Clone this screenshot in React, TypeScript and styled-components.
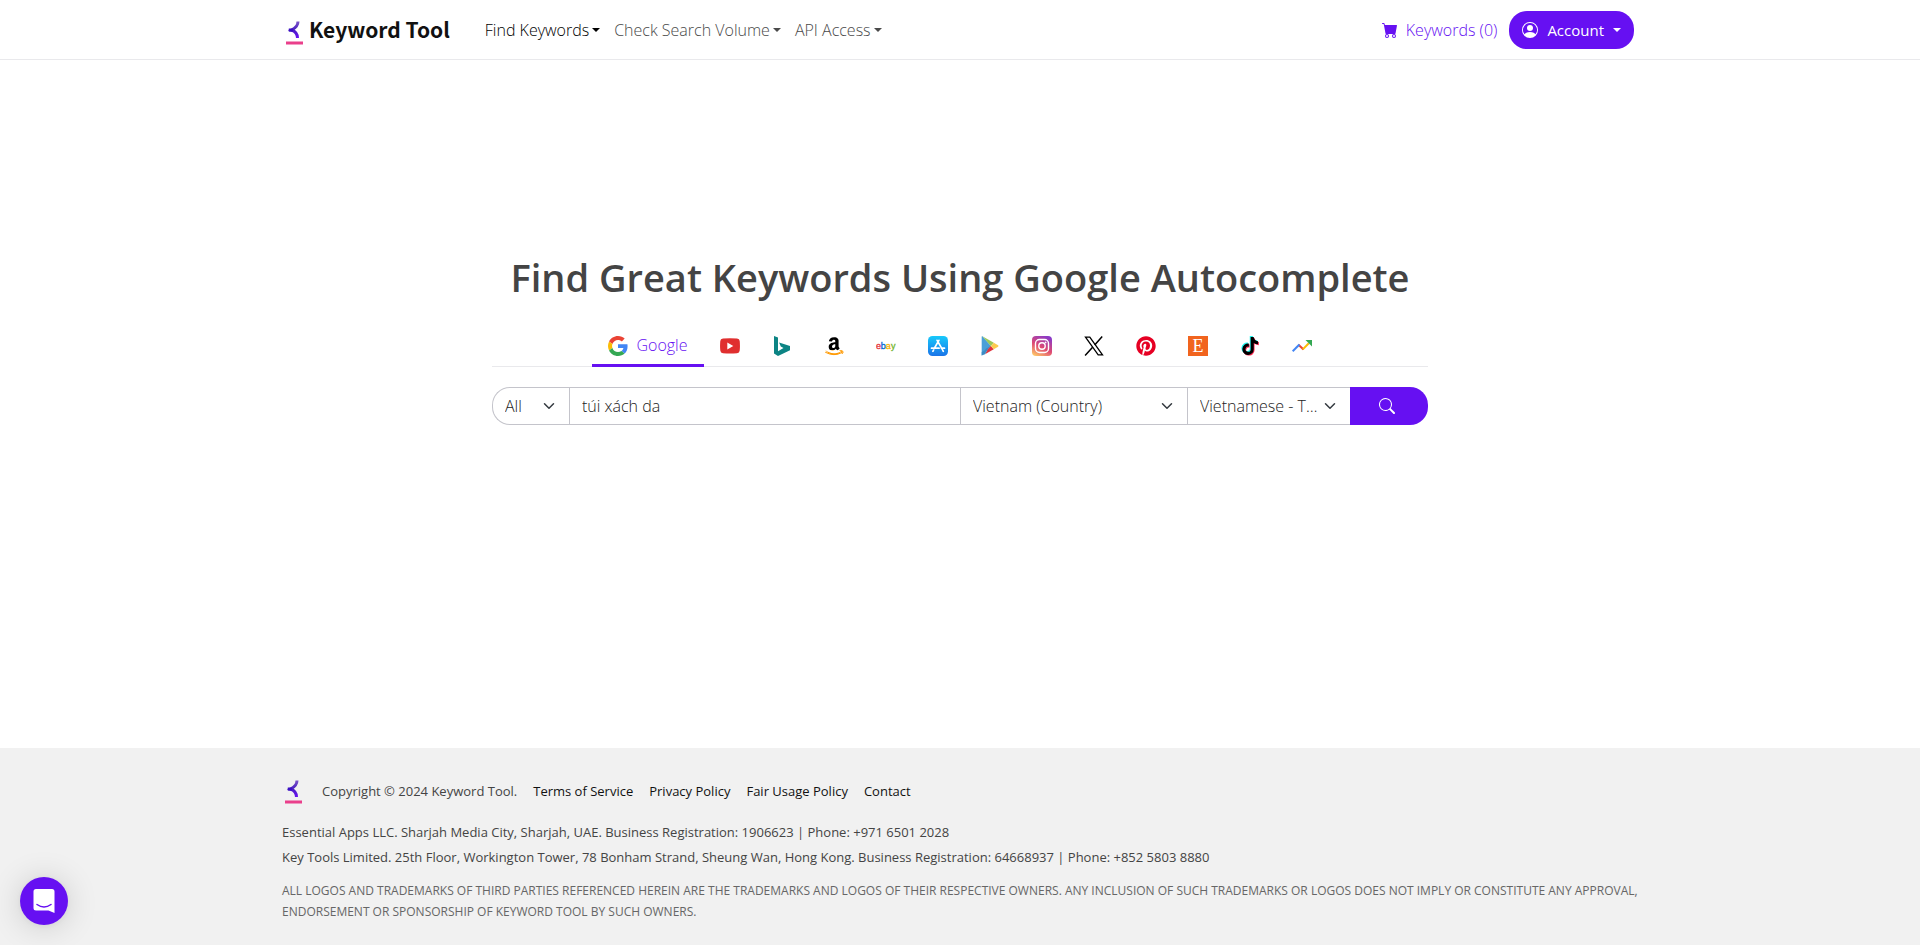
import React, { useState } from 'react';
import styled, { createGlobalStyle } from 'styled-components';
import { BsCartFill, BsPersonCircle, BsSearch } from 'react-icons/bs';
import { FaAmazon, FaPinterest, FaTiktok } from 'react-icons/fa6';

const violet = '#6610f2';
const line = '#e9e9ec';

const GlobalStyle = createGlobalStyle`
  *, *::before, *::after { box-sizing: border-box; }
  body {
    margin: 0;
    background: #fff;
    color: #222;
    font-family: "Open Sans", "Noto Sans", sans-serif;
    font-size: 16px;
    font-weight: 300;
    line-height: 24px;
  }
  a { text-decoration: none; color: inherit; }
  button, input, select { font: inherit; color: inherit; margin: 0; }
  svg { display: block; flex: none; }
`;

const Page = styled.div`
  min-height: 100vh;
  display: flex;
  flex-direction: column;
`;

const Header = styled.header`
  border-bottom: 1px solid ${line};
`;

const HeaderInner = styled.div`
  max-width: 1348px;
  height: 59px;
  margin: 0 auto;
  display: flex;
  align-items: center;
`;

const Brand = styled.a`
  display: flex;
  align-items: flex-end;
  gap: 6px;
  margin-right: 28px;
  padding-bottom: 1px;
  color: #111;
  font-family: "Noto Sans CJK JP", "Noto Sans", sans-serif;
  font-size: 21px;
  font-weight: 700;
  line-height: 30px;
  white-space: nowrap;
`;

const BrandName = styled.span`
  padding-bottom: 1px;
`;

const Nav = styled.nav`
  display: flex;
  flex: 1;
`;

const MenuButton = styled.button<{ $active?: boolean }>`
  display: flex;
  align-items: center;
  gap: 3px;
  padding: 8px 7px;
  border: 0;
  background: none;
  white-space: nowrap;
  color: ${(p) => (p.$active ? '#000' : '#4a4a4a')};
`;

const Caret = styled.span`
  width: 0;
  height: 0;
  border: 4px solid transparent;
  border-top-color: currentColor;
  border-bottom: 0;
`;

const CartLink = styled.a`
  display: flex;
  align-items: center;
  gap: 8px;
  padding: 0 12px;
  color: ${violet};
  white-space: nowrap;
`;

const AccountButton = styled.button`
  display: flex;
  align-items: center;
  gap: 9px;
  height: 38px;
  padding: 0 13px;
  border: 0;
  border-radius: 18px;
  background: ${violet};
  color: #fff;
  font-size: 15px;
  font-weight: 400;
  white-space: nowrap;
`;

const Main = styled.main`
  flex: 1;
  width: 100%;
  max-width: 936px;
  margin: 0 auto;
  padding: 193px 0 48px;
`;

const Title = styled.h1`
  margin: 0 0 21px;
  color: #444;
  font-size: 38px;
  line-height: 48px;
  font-weight: 600;
  text-align: center;
`;

const Tabs = styled.div`
  display: flex;
  justify-content: center;
  margin-bottom: 20px;
  border-bottom: 1px solid ${line};
`;

const Tab = styled.button<{ $active: boolean }>`
  display: flex;
  align-items: center;
  gap: 8px;
  height: 45px;
  margin-bottom: -1px;
  padding: 6px 16px 0;
  border: 0;
  border-bottom: 3px solid ${(p) => (p.$active ? violet : 'transparent')};
  background: none;
  color: ${violet};
`;

const TabLabel = styled.span`
  padding-bottom: 3px;
`;

const SearchBar = styled.form`
  display: grid;
  grid-template-columns: 77px minmax(0, 391px) minmax(0, 227px) minmax(0, 163px) 78px;
  height: 38px;
`;

const field = `
  width: 100%;
  height: 38px;
  padding: 0 12px;
  border: 1px solid #c4c4cb;
  border-right: 0;
  border-radius: 0;
  background: #fff;
  outline: 0;
`;

const SelectWrap = styled.div`
  position: relative;
`;

const Select = styled.select<{ $first?: boolean }>`
  ${field}
  appearance: none;
  padding-right: 32px;
  text-overflow: ellipsis;
  border-radius: ${(p) => (p.$first ? '18px 0 0 18px' : '0')};
`;

const Chevron = styled.svg`
  position: absolute;
  right: 14px;
  top: 13px;
  pointer-events: none;
`;

const QueryInput = styled.input`
  ${field}
`;

const SearchButton = styled.button`
  display: flex;
  align-items: center;
  justify-content: center;
  padding: 0 4px 0 0;
  border: 0;
  border-radius: 0 18px 18px 0;
  background: ${violet};
  color: #fff;
`;

const Footer = styled.footer`
  background: #f1f1f1;
`;

const FooterInner = styled.div`
  max-width: 1356px;
  margin: 0 auto;
  padding: 31px 0 23px;
  color: #444;
  font-size: 13px;
  font-weight: 400;
  line-height: 25px;
`;

const FooterLinks = styled.div`
  display: flex;
  align-items: center;
  gap: 16px;
  margin-bottom: 16px;
  padding-left: 3px;
`;

const Copyright = styled.span`
  padding-left: 4px;
`;

const FooterLink = styled.a`
  color: #111;
`;

const Company = styled.p`
  margin: 0;
`;

const Legal = styled.p`
  margin: 10px 0 0;
  color: #666;
  font-size: 12px;
  line-height: 21px;
  text-transform: uppercase;
`;

const ChatButton = styled.button`
  position: fixed;
  left: 20px;
  bottom: 20px;
  width: 48px;
  height: 48px;
  padding: 0;
  display: flex;
  align-items: center;
  justify-content: center;
  border: 0;
  border-radius: 50%;
  background: ${violet};
  box-shadow: 0 1px 6px rgba(0, 0, 0, 0.06), 0 2px 32px rgba(0, 0, 0, 0.16);
`;

const Mark = ({ id }: { id: string }) => (
  <svg width="17" height="24" viewBox="0 0 17 24" aria-hidden="true">
    <defs>
      <linearGradient id={id} x1="0" y1="0" x2="0" y2="1">
        <stop offset="0" stopColor="#7c56c8" />
        <stop offset="0.5" stopColor="#4a1fc0" />
        <stop offset="1" stopColor="#6a10f5" />
      </linearGradient>
    </defs>
    <path
      d="M12 .5C12 4.500 9.500 7 5.500 9C9.500 10.500 11.500 13 11.500 17"
      fill="none"
      stroke={`url(#${id})`}
      strokeWidth="3"
    />
    <path d="M2.800 7.500h4v3.200h-4z" fill="#3a0fc4" />
    <rect y="20.500" width="17" height="3" fill="#ea3f8b" />
  </svg>
);

const GoogleIcon = () => (
  <svg width="20" height="20" viewBox="0 0 48 48" aria-hidden="true">
    <path fill="#ea4335" d="M24 9.500c3.540 0 6.710 1.220 9.210 3.600l6.850-6.850C35.900 2.380 30.470 0 24 0 14.620 0 6.510 5.380 2.560 13.220l7.980 6.190C12.430 13.720 17.740 9.500 24 9.500z" />
    <path fill="#4285f4" d="M46.980 24.550c0-1.570-.15-3.090-.38-4.550H24v9.020h12.940c-.58 2.960-2.260 5.480-4.780 7.180l7.730 6c4.510-4.180 7.090-10.360 7.090-17.650z" />
    <path fill="#fbbc05" d="M10.530 28.590c-.48-1.450-.76-2.990-.76-4.590s.27-3.140.76-4.590l-7.980-6.190C.92 16.460 0 20.120 0 24c0 3.880.92 7.540 2.560 10.780l7.970-6.190z" />
    <path fill="#34a853" d="M24 48c6.480 0 11.930-2.130 15.890-5.810l-7.730-6c-2.150 1.450-4.920 2.300-8.160 2.300-6.260 0-11.570-4.220-13.470-9.910l-7.980 6.190C6.510 42.620 14.620 48 24 48z" />
  </svg>
);

const YoutubeIcon = () => (
  <svg width="20" height="20" viewBox="0 0 20 20" aria-hidden="true">
    <path fill="#e02f2f" d="M3 2.600Q10 1.700 17 2.600Q19.600 2.800 19.700 5Q20.200 10 19.700 14.500Q19.500 17 17 17.200Q10 17.900 3 17.200Q.5 17 .3 14.500Q-.2 10 .3 5Q.4 2.800 3 2.600z" />
    <path fill="#fff" d="M7.300 6.500l6 3.500l-6 3.500z" />
  </svg>
);

const BingIcon = () => (
  <svg width="20" height="20" viewBox="0 0 20 20" aria-hidden="true">
    <path fill="#0c8484" d="M2 0l4 1.400v13.800l5.500-3.300l-2.700-1.300l-1.700-4.200L18 9.900v4.300L6 20l-4-2.500z" />
  </svg>
);

const AmazonIcon = () => (
  <svg width="20" height="20" viewBox="0 0 20 20" aria-hidden="true">
    <defs>
      <linearGradient id="amazon" x1="0" y1="0" x2="0" y2="1">
        <stop offset="0.74" stopColor="#000" />
        <stop offset="0.74" stopColor="#f90" />
      </linearGradient>
    </defs>
    <FaAmazon size={20} fill="url(#amazon)" />
    <path d="M1.200 16.200Q10 21 18.500 16.300M16.500 15.400q2.800-.5 2.600.4q0 1-.8 2" fill="none" stroke="#f90" strokeWidth="1" />
  </svg>
);

const EbayIcon = () => (
  <svg width="20" height="20" viewBox="0 0 20 20" aria-hidden="true">
    <text y="12.500" fontSize="9" fontWeight="400" fontFamily="Liberation Sans, sans-serif" strokeWidth="0.300">
      <tspan x="0" fill="#e53238" stroke="#e53238">e</tspan>
      <tspan x="4.800" fill="#0064d2" stroke="#0064d2">b</tspan>
      <tspan x="9.800" fill="#f5af02" stroke="#f5af02">a</tspan>
      <tspan x="15" fill="#6fb52c" stroke="#6fb52c">y</tspan>
    </text>
  </svg>
);

const AppStoreIcon = () => (
  <svg width="20" height="20" viewBox="0 0 20 20" aria-hidden="true">
    <defs>
      <linearGradient id="appstore" x1="0" y1="0" x2="0" y2="1">
        <stop offset="0" stopColor="#17c9fb" />
        <stop offset="1" stopColor="#1a74e8" />
      </linearGradient>
    </defs>
    <rect width="20" height="20" rx="4.500" fill="url(#appstore)" />
    <path
      d="M10.900 4.300L6.200 12.500M9.100 4.300l5.400 9.400M3.500 12.200h7.600M13.400 12.200h3.100M5.500 14.200l-.6 1.100M14.800 14.400l.5.900"
      fill="none"
      stroke="#fff"
      strokeWidth="1.700"
      strokeLinecap="round"
    />
  </svg>
);

const PlayIcon = () => (
  <svg width="20" height="20" viewBox="0 0 20 20" aria-hidden="true">
    <path fill="#4a9fd8" d="M1.700.6v19L11 10L2.500.2Q1.800 0 1.700.6z" />
    <path fill="#3c8cc4" d="M1.700 19.400L11 10L6 12.500z" />
    <path fill="#9cc95a" d="M2.400.2L13.800 6.700L10.800 10z" />
    <path fill="#e0353f" d="M5 18.300l8.800-5l-3-3.300L7.500 13.500z" />
    <path fill="#3c8cc4" d="M1.700 19.500L5 18.300L8 13L1.700 16z" />
    <path fill="#fbcb4f" d="M13.800 6.700l4.300 2.500q.8.800 0 1.600l-4.300 2.500l-3-3.300z" />
  </svg>
);

const InstagramIcon = () => (
  <svg width="20" height="20" viewBox="0 0 20 20" aria-hidden="true">
    <defs>
      <linearGradient id="instagram" x1="0.2" y1="1" x2="0.7" y2="0">
        <stop offset="0" stopColor="#fdc468" />
        <stop offset="0.45" stopColor="#df4a72" />
        <stop offset="1" stopColor="#8a3ac8" />
      </linearGradient>
    </defs>
    <rect width="20" height="20" rx="4" fill="url(#instagram)" />
    <g fill="none" stroke="#fff" strokeWidth="1.400">
      <rect x="3.500" y="3.500" width="13" height="13" rx="4" />
      <circle cx="10" cy="10" r="3.200" />
    </g>
    <circle cx="13.600" cy="6.400" r="0.900" fill="#fff" />
  </svg>
);

const XIcon = () => (
  <svg width="20" height="20" viewBox="0 0 20 20" aria-hidden="true">
    <path d="M1.500 1.100h4.300l12.700 17.800h-4.300z" fill="#fff" stroke="#000" strokeWidth="1.300" />
    <path d="M18.200.6l-7.500 8.500M8.600 11.300L1.100 19.500" fill="none" stroke="#000" strokeWidth="1.500" />
  </svg>
);

const EtsyIcon = () => (
  <svg width="20" height="20" viewBox="0 0 20 20" aria-hidden="true">
    <rect width="20" height="20" fill="#f1641e" />
    <text x="10" y="16" textAnchor="middle" fontSize="18" fontWeight="400" fontFamily="Liberation Serif, serif" fill="#fff">
      E
    </text>
  </svg>
);

const TiktokIcon = () => (
  <svg width="20" height="20" viewBox="0 0 20 20" aria-hidden="true">
    <FaTiktok x="0.300" y="0" size={18} color="#25f4ee" />
    <FaTiktok x="2" y="1.800" size={18} color="#fe2c55" />
    <FaTiktok x="1.200" y="0.900" size={18} color="#000" />
  </svg>
);

const TrendsIcon = () => (
  <svg width="20" height="20" viewBox="0 0 20 20" aria-hidden="true">
    <g fill="none" strokeWidth="2">
      <path stroke="#ea4335" d="M6.500 8.700l5 4.800" />
      <path stroke="#4285f4" d="M.7 15.300l6.700-6.800" />
      <path stroke="#fbbc04" d="M10.800 13.400l6-6.200" />
    </g>
    <path fill="#34a853" d="M13.500 4H20v6.500z" />
  </svg>
);

const ChevronIcon = () => (
  <Chevron width="12" height="12" viewBox="0 0 16 16" aria-hidden="true">
    <path d="M2 5l6 6 6-6" fill="none" stroke="#343a40" strokeWidth="2" strokeLinecap="round" strokeLinejoin="round" />
  </Chevron>
);

const sources = [
  { name: 'Google', icon: <GoogleIcon /> },
  { name: 'YouTube', icon: <YoutubeIcon /> },
  { name: 'Bing', icon: <BingIcon /> },
  { name: 'Amazon', icon: <AmazonIcon /> },
  { name: 'eBay', icon: <EbayIcon /> },
  { name: 'App Store', icon: <AppStoreIcon /> },
  { name: 'Play Store', icon: <PlayIcon /> },
  { name: 'Instagram', icon: <InstagramIcon /> },
  { name: 'X', icon: <XIcon /> },
  { name: 'Pinterest', icon: <FaPinterest size={20} color="#e60023" /> },
  { name: 'Etsy', icon: <EtsyIcon /> },
  { name: 'TikTok', icon: <TiktokIcon /> },
  { name: 'Google Trends', icon: <TrendsIcon /> },
];

const footerLinks = ['Terms of Service', 'Privacy Policy', 'Fair Usage Policy', 'Contact'];

export default function App() {
  const [source, setSource] = useState('Google');
  const [query, setQuery] = useState('túi xách da');

  return (
    <Page>
      <GlobalStyle />
      <Header>
        <HeaderInner>
          <Brand href="#">
            <Mark id="mark-top" />
            <BrandName>Keyword Tool</BrandName>
          </Brand>
          <Nav>
            <MenuButton $active>Find Keywords<Caret /></MenuButton>
            <MenuButton>Check Search Volume<Caret /></MenuButton>
            <MenuButton>API Access<Caret /></MenuButton>
          </Nav>
          <CartLink href="#">
            <BsCartFill size={16} />
            Keywords (0)
          </CartLink>
          <AccountButton>
            <BsPersonCircle size={16} />
            Account
            <Caret />
          </AccountButton>
        </HeaderInner>
      </Header>

      <Main>
        <Title>Find Great Keywords Using Google Autocomplete</Title>
        <Tabs role="tablist">
          {sources.map(({ name, icon }) => (
            <Tab
              key={name}
              type="button"
              role="tab"
              aria-label={name}
              aria-selected={name === source}
              $active={name === source}
              onClick={() => setSource(name)}
            >
              {icon}
              {name === source && <TabLabel>{name}</TabLabel>}
            </Tab>
          ))}
        </Tabs>
        <SearchBar onSubmit={(e) => e.preventDefault()}>
          <SelectWrap>
            <Select $first aria-label="Category">
              <option>All</option>
            </Select>
            <ChevronIcon />
          </SelectWrap>
          <QueryInput aria-label="Keyword" value={query} onChange={(e) => setQuery(e.target.value)} />
          <SelectWrap>
            <Select aria-label="Country">
              <option>Vietnam (Country)</option>
            </Select>
            <ChevronIcon />
          </SelectWrap>
          <SelectWrap>
            <Select aria-label="Language">
              <option>Vietnamese - Tiếng Việt</option>
            </Select>
            <ChevronIcon />
          </SelectWrap>
          <SearchButton aria-label="Search">
            <BsSearch size={16} />
          </SearchButton>
        </SearchBar>
      </Main>

      <Footer>
        <FooterInner>
          <FooterLinks>
            <Mark id="mark-bottom" />
            <Copyright>Copyright © 2024 Keyword Tool.</Copyright>
            {footerLinks.map((label) => (
              <FooterLink key={label} href="#">{label}</FooterLink>
            ))}
          </FooterLinks>
          <Company>Essential Apps LLC. Sharjah Media City, Sharjah, UAE. Business Registration: 1906623 | Phone: +971 6501 2028</Company>
          <Company>Key Tools Limited. 25th Floor, Workington Tower, 78 Bonham Strand, Sheung Wan, Hong Kong. Business Registration: 64668937 | Phone: +852 5803 8880</Company>
          <Legal>
            All logos and trademarks of third parties referenced herein are the trademarks and logos of their respective owners. Any inclusion of such trademarks or logos does not imply or constitute any approval, endorsement or sponsorship of Keyword Tool by such owners.
          </Legal>
        </FooterInner>
      </Footer>

      <ChatButton aria-label="Open chat">
        <svg width="22" height="24" viewBox="0 0 22 24" aria-hidden="true">
          <path fill="#fff" d="M3 0h16q2.500 0 2.500 2.500V24q-3-1.300-6-2.500H3Q.5 21.500.5 19V2.500Q.5 0 3 0z" />
          <path d="M4 15.500q7 5 14 0" fill="none" stroke={violet} strokeWidth="1.500" strokeLinecap="round" />
        </svg>
      </ChatButton>
    </Page>
  );
}
